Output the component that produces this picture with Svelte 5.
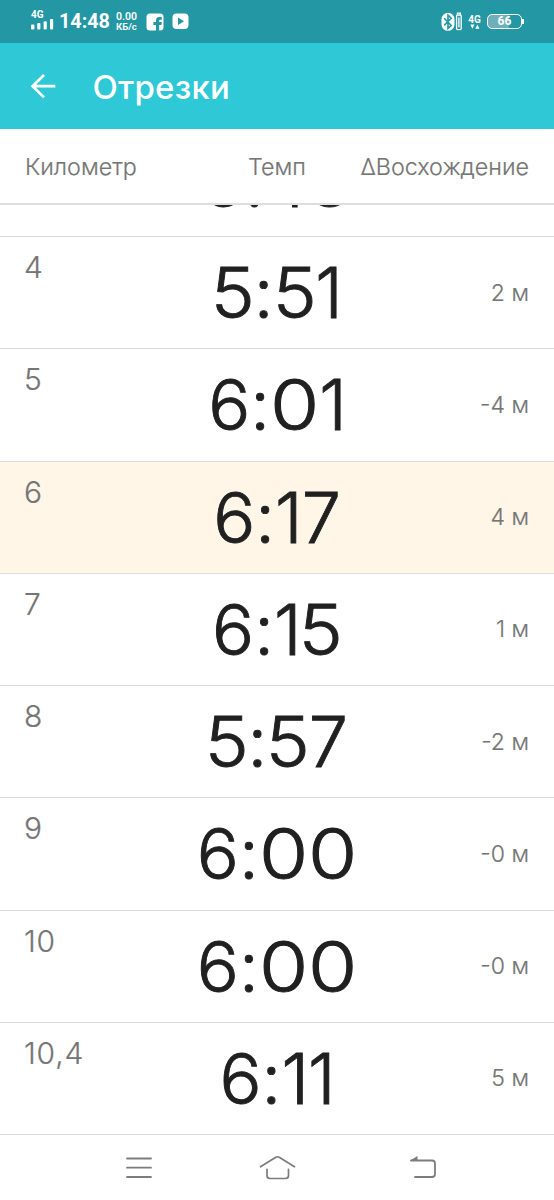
<script>
	const splits = [
		{ km: '4', pace: '5:51', climb: '2 м' },
		{ km: '5', pace: '6:01', climb: '-4 м' },
		{ km: '6', pace: '6:17', climb: '4 м', current: true },
		{ km: '7', pace: '6:15', climb: '1 м' },
		{ km: '8', pace: '5:57', climb: '-2 м' },
		{ km: '9', pace: '6:00', climb: '-0 м' },
		{ km: '10', pace: '6:00', climb: '-0 м' },
		{ km: '10,4', pace: '6:11', climb: '5 м' }
	];
</script>

{#snippet paceText(pace)}
	<span class="pace">{#each pace as ch}<span class:zero={ch === '0'} class:one={ch === '1'} class:five={ch === '5'}>{ch}</span>{/each}</span>
{/snippet}

<div class="screen">
	<div class="status">
		<div class="network">
			<span class="gen">4G</span>
			<svg width="23" height="11" viewBox="0 0 23 11" fill="#fff">
				<rect x="0" y="5.5" width="3.4" height="5" rx="1" />
				<rect x="6.2" y="4" width="3.2" height="6.5" rx="1" />
				<rect x="12.6" y="2.2" width="3.2" height="8.3" rx="1" />
				<rect x="19" y="0" width="3.2" height="10.5" rx="1" />
			</svg>
		</div>
		<span class="clock">14:48</span>
		<div class="speed"><span>0.00</span><span>КБ/с</span></div>
		<svg class="fb" width="18" height="18" viewBox="0 0 18 18">
			<rect x="0.5" y="0.5" width="17" height="17" rx="3.5" fill="#fff" />
			<path d="M10 18v-6H7.4V9H10V7.4Q10 4 13.4 4h2.4v2.8h-1.6q-1 0-1 1V9h2.6l-.4 3h-2.2v6z" fill="#2497a5" />
		</svg>
		<svg class="yt" width="17" height="17" viewBox="0 0 17 17">
			<rect x="0.5" y="0.5" width="16" height="15.5" rx="4" fill="#fff" />
			<path d="M6 4.5v7.4l6-3.7z" fill="#2497a5" />
		</svg>
		<div class="right">
			<svg width="22" height="20" viewBox="0 0 22 20" fill="none">
				<rect x="0.5" y="0.8" width="13" height="18" rx="6.5" fill="#fff" />
				<path d="M3.2 6.2l7 7.2L7 16.4V3.2l3.2 3-7 7.2" stroke="#2497a5" stroke-width="1.6" />
				<path d="M16.4 2.6V1.2h3v1.4" stroke="#fff" stroke-width="1.2" />
				<rect x="15.6" y="3" width="4.6" height="14.6" rx="1" stroke="#fff" stroke-width="1.3" />
				<path d="M17.9 5.4v9.8" stroke="#fff" stroke-width="1.3" />
			</svg>
			<div class="data">
				<span>4G</span>
				<svg width="10" height="5" viewBox="0 0 10 5" fill="#fff"><path d="M.3.5h4.2L2.4 4.7zM5.3 4.7h4.2L7.4.5z" /></svg>
			</div>
			<div class="battery"><span>66</span></div>
			<i class="cap"></i>
		</div>
	</div>

	<header>
		<svg width="26" height="26" viewBox="0 0 26 26" fill="none" stroke="#fff" stroke-width="2.7">
			<path d="M25.3 13.2H3M14 2L2.6 13.2 14 24.4" />
		</svg>
		<h1>Отрезки</h1>
	</header>

	<div class="columns">
		<span>Километр</span>
		<span>Темп</span>
		<span class="climb-title">ΔВосхождение</span>
	</div>

	<div class="list">
		<!-- scrolled mostly under the column titles -->
		<div class="row partial">
			{@render paceText('5:48')}
		</div>
		{#each splits as split}
			<div class="row" class:current={split.current}>
				<span class="km">{split.km}</span>
				{@render paceText(split.pace)}
				<span class="climb">{split.climb}</span>
			</div>
		{/each}
	</div>

	<nav>
		<svg width="28" height="28" viewBox="0 0 28 28" fill="none" stroke="#7c7c7c" stroke-width="1.8" stroke-linecap="round">
			<path d="M2 4.5h24M2 13.7h24M2 23h24" />
		</svg>
		<svg class="home" width="38" height="28" viewBox="0 0 38 28" fill="none" stroke="#7c7c7c" stroke-width="1.7" stroke-linecap="round">
			<path d="M2.5 12.8L17.8 3.2q1.7-.9 3.4 0L36.5 12.8M9 15.3v6.2q0 3 3 3h15.5q3 0 3-3v-6.2" />
		</svg>
		<svg width="28" height="28" viewBox="0 0 28 28" fill="none" stroke="#7c7c7c" stroke-width="1.8" stroke-linecap="round">
			<path d="M2 6.5h21q3 0 3 3V20q0 3-3 3H6" />
			<path d="M.8 6.8L8.5 2v4.8z" fill="#7c7c7c" stroke="none" />
		</svg>
	</nav>
</div>

<style>
	:global(body) {
		background: #fff;
	}

	.screen {
		width: 554px;
		height: 1200px;
		display: flex;
		flex-direction: column;
		overflow: hidden;
		background: #fff;
		font-family: Inter, 'Noto Sans', sans-serif;
		color: #757575;
	}

	.status {
		height: 43px;
		flex-shrink: 0;
		box-sizing: border-box;
		padding-left: 31px;
		padding-right: 30px;
		display: flex;
		align-items: center;
		background: #2497a5;
		color: #fff;
		font-family: Roboto, sans-serif;
	}

	.network {
		width: 23px;
		display: flex;
		flex-direction: column;
		margin-top: -3px;
	}

	.gen {
		font-size: 10px;
		line-height: 9px;
		font-weight: 700;
	}

	.clock {
		margin-left: 5px;
		width: 50px;
		font-size: 19.8px;
		font-weight: 700;
		white-space: nowrap;
	}

	.speed {
		margin-left: 7px;
		width: 23px;
		display: flex;
		flex-direction: column;
		font-size: 10.5px;
		line-height: 10px;
		font-weight: 600;
	}

	.speed span:last-child {
		font-size: 9.6px;
	}

	.fb {
		margin-left: 7px;
	}

	.yt {
		margin-left: 8px;
	}

	.right {
		margin-left: auto;
		display: flex;
		align-items: center;
	}

	.data {
		width: 13px;
		margin-left: 5px;
		display: flex;
		flex-direction: column;
		align-items: center;
		font-size: 10px;
		line-height: 9px;
		font-weight: 700;
	}

	.battery {
		margin-left: 6px;
		box-sizing: border-box;
		width: 35px;
		height: 15px;
		border: 1.5px solid #fff;
		border-radius: 5px;
		background: linear-gradient(90deg, #6fafb9 64%, transparent 64%);
		font-size: 12px;
		line-height: 13px;
		font-weight: 700;
		text-align: center;
	}

	.cap {
		width: 2px;
		height: 5px;
		background: #fff;
	}

	header {
		height: 86px;
		flex-shrink: 0;
		box-sizing: border-box;
		padding-left: 30px;
		display: flex;
		align-items: center;
		background: #2ec8d6;
		color: #fff;
	}

	h1 {
		margin: 1px 0 0 36.5px;
		font-size: 33px;
		font-weight: 500;
		letter-spacing: 0.2px;
	}

	.columns {
		height: 76px;
		flex-shrink: 0;
		box-sizing: border-box;
		padding: 1px 25px 0;
		border-bottom: 2px solid #dedede;
		display: grid;
		grid-template-columns: 1fr auto 1fr;
		align-items: center;
		font-size: 23.3px;
		font-weight: 300;
		-webkit-text-stroke: 0.2px;
	}

	.climb-title {
		justify-self: end;
	}

	.list {
		height: 930px;
		flex-shrink: 0;
		overflow: hidden;
		display: flex;
		flex-direction: column;
		justify-content: flex-end;
	}

	.row {
		height: 112.25px;
		flex-shrink: 0;
		box-sizing: border-box;
		padding: 0 25px;
		border-bottom: 1.5px solid #dadada;
		display: grid;
		grid-template-columns: 1fr auto 1fr;
		align-items: center;
	}

	.partial {
		display: flex;
		justify-content: center;
	}

	.current {
		background: #fff6e8;
	}

	.km {
		align-self: start;
		padding-top: 12px;
		margin-left: -1px;
		font-size: 30px;
		font-weight: 300;
		letter-spacing: 0.8px;
		-webkit-text-stroke: 0.2px;
	}

	.pace {
		display: flex;
		margin-top: 1px;
		color: #202020;
		font-size: 70px;
		font-weight: 300;
		line-height: 84px;
		-webkit-text-stroke: 0.9px;
	}

	.partial .pace {
		margin-top: 4px;
	}

	.zero {
		margin: 0 3px;
		transform: scaleX(1.14);
	}

	.one {
		margin-right: -1px;
	}

	.five {
		transform: scaleX(1.06);
	}

	.climb {
		justify-self: end;
		font-size: 23px;
		font-weight: 300;
		-webkit-text-stroke: 0.2px;
	}

	nav {
		flex: 1;
		padding-left: 125px;
		display: flex;
		align-items: center;
	}

	.home {
		margin: 0 113px 0 105px;
	}
</style>
